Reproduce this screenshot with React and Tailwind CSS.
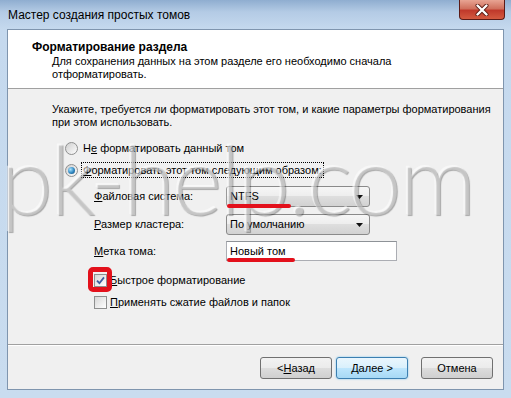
// App.jsx — Win7 "New Simple Volume" wizard, format page
const ui = "font-['Liberation_Sans',Arial,sans-serif]";

function Radio({ checked }) {
  return (
    <span className="w-[13px] h-[13px] shrink-0 rounded-full border border-[#8e8f8f] bg-[linear-gradient(135deg,#cfcfcf,#fdfdfd)] flex items-center justify-center">
      {checked && (
        <span className="w-[7px] h-[7px] rounded-full bg-[radial-gradient(circle_at_35%_35%,#a9e4ff,#2f86c0_55%,#174a73)]" />
      )}
    </span>
  );
}

function Check({ checked }) {
  return (
    <span className="w-[13px] h-[13px] shrink-0 border border-[#8e8f8f] bg-[linear-gradient(135deg,#d6d6d6,#ffffff)] flex items-center justify-center">
      {checked && (
        <svg width="9" height="9" viewBox="0 0 9 9">
          <path d="M1 4.6 L3.4 7.2 L8 1.4" fill="none" stroke="#3d5c9e" strokeWidth="1.8" />
        </svg>
      )}
    </span>
  );
}

function Combo({ value }) {
  return (
    <div className="w-[144px] h-[21px] rounded-[3px] border border-[#8a8a8a] bg-[linear-gradient(#f6f6f6_0%,#ededed_50%,#dedede_50%,#d2d2d2_100%)] flex items-center justify-between pl-[3px] pr-[6px]">
      <span>{value}</span>
      <svg width="7" height="4" viewBox="0 0 7 4">
        <path d="M0 0 H7 L3.5 4 Z" fill="#111" />
      </svg>
    </div>
  );
}

function Button({ children, focused }) {
  return (
    <button
      className={`w-[72px] h-[22px] rounded-[3px] border text-[11px] text-black flex items-center justify-center ${
        focused
          ? "border-[#3c7fb1] bg-[linear-gradient(#eaf6fd_0%,#d9f0fc_50%,#bee6fd_50%,#a7d9f5_100%)] shadow-[0_0_2px_#6fc3ee]"
          : "border-[#707070] bg-[linear-gradient(#f2f2f2_0%,#ebebeb_50%,#dddddd_50%,#cfcfcf_100%)]"
      }`}
    >
      {children}
    </button>
  );
}

export default function App() {
  return (
    <div
      className={`${ui} relative w-[511px] h-[398px] overflow-hidden text-[11px] text-black bg-[linear-gradient(180deg,#8fadd0_0px,#b4cbe5_12px,#c5d9ee_29px,#c9dcef_100%)]`}
    >
      {/* Title bar */}
      <div className="h-[29px] flex items-center pl-[8px] text-[12px]">
        Мастер создания простых томов
      </div>
      <div className="absolute top-0 right-[6px] w-[46px] h-[20px] rounded-b-[4px] border border-t-0 border-[#5b1a16] bg-[linear-gradient(#e8a493_0%,#d0705d_45%,#c0392b_55%,#d45a40_100%)] flex items-center justify-center">
        <svg width="14" height="12" viewBox="0 0 14 12">
          <path d="M2.5 1.5 L11.5 10.5 M11.5 1.5 L2.5 10.5" stroke="#5a1a12" strokeWidth="4" strokeLinecap="round" />
          <path d="M2.5 1.5 L11.5 10.5 M11.5 1.5 L2.5 10.5" stroke="#ffffff" strokeWidth="2.4" strokeLinecap="round" />
        </svg>
      </div>

      {/* Client area */}
      <div className="mx-[7px] h-[361px] border border-[#7f95ae] bg-[#f0f0f0] flex flex-col">
        {/* Header */}
        <div className="h-[59px] bg-white border-b border-[#a0a0a0] pt-[9px]">
          <div className="pl-[24px] text-[12px] font-bold leading-[16px]">Форматирование раздела</div>
          <div className="pl-[44px] leading-[13px]">
            Для сохранения данных на этом разделе его необходимо сначала
            <br />
            отформатировать.
          </div>
        </div>

        {/* Body */}
        <div className="h-[255px] pt-[14px]">
          <div className="pl-[44px] leading-[13px]">
            Укажите, требуется ли форматировать этот том, и какие параметры форматирования
            <br />
            при этом использовать.
          </div>

          <div className="mt-[11px] h-[16px] pl-[57px] flex items-center">
            <Radio />
            <span className="ml-[5px]">
              Н<u>е</u> форматировать данный том
            </span>
          </div>
          <div className="mt-[6px] h-[16px] pl-[57px] flex items-center">
            <Radio checked />
            <span className="ml-[3px] h-[16px] border border-dotted border-black px-[1px] flex items-center">
              <span>
                <u>Ф</u>орматировать этот том следующим образом:
              </span>
            </span>
          </div>

          <div className="mt-[8px] pl-[86px] flex items-center">
            <span className="w-[132px]">
              <u>Ф</u>айловая система:
            </span>
            <Combo value="NTFS" />
          </div>
          <div className="mt-[7px] pl-[86px] flex items-center">
            <span className="w-[132px]">
              <u>Р</u>азмер кластера:
            </span>
            <Combo value="По умолчанию" />
          </div>
          <div className="mt-[6px] pl-[86px] flex items-center">
            <span className="w-[132px]">
              <u>М</u>етка тома:
            </span>
            <div className="w-[171px] h-[20px] border border-[#abadb3] border-t-[#8e9297] bg-white flex items-center pl-[3px]">
              Новый том
            </div>
          </div>

          <div className="mt-[11px] h-[16px] pl-[86px] flex items-center">
            <Check checked />
            <span className="ml-[3px]">
              <u>Б</u>ыстрое форматирование
            </span>
          </div>
          <div className="mt-[6px] h-[16px] pl-[86px] flex items-center">
            <Check />
            <span className="ml-[3px]">
              <u>П</u>рименять сжатие файлов и папок
            </span>
          </div>
        </div>

        {/* Footer */}
        <div className="flex-1 border-t border-[#a0a0a0] shadow-[inset_0_1px_0_#ffffff] pt-[12px] pr-[10px] flex justify-end items-start">
          <Button>
            &lt; <u>Н</u>азад
          </Button>
          <div className="ml-[4px]">
            <Button focused>Далее &gt;</Button>
          </div>
          <div className="ml-[13px]">
            <Button>Отмена</Button>
          </div>
        </div>
      </div>

      {/* Watermark */}
      <div className="pointer-events-none absolute left-[0px] top-[130px] font-['Lato',sans-serif] font-light text-[96px] leading-none tracking-[-3px] text-white/30 [text-shadow:1px_1px_1px_rgba(0,0,0,0.3),-1px_-1px_0_rgba(255,255,255,0.5)] whitespace-nowrap">
        pk-help.com
      </div>

      {/* Red marks */}
      <div className="absolute left-[227px] top-[204px] w-[64px] h-[4px] rounded-full bg-[#e3101b]" />
      <div className="absolute left-[227px] top-[258px] w-[68px] h-[4px] rounded-full bg-[#e3101b]" />
      <div className="absolute left-[88px] top-[267px] w-[24px] h-[25px] rounded-[5px] border-[5px] border-[#e3101b]" />
    </div>
  );
}
